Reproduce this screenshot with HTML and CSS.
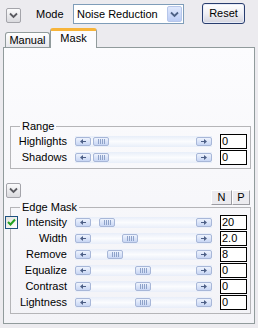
FILE: index.html
```html
<!DOCTYPE html>
<html lang="en">
<head>
    <meta charset="UTF-8">
    <title>Noise Reduction - Mask</title>
    <link rel="stylesheet" href="styles.css">
</head>
<body>
    <div class="window">
        <!-- Top toolbar -->
        <div class="toolbar">
            <div class="chevron-btn">
                <svg width="9" height="7" viewBox="0 0 9 7"><polyline points="1,1.5 4.5,5 8,1.5" fill="none" stroke="#5a5a60" stroke-width="1.8"/></svg>
            </div>
            <span class="mode-label">Mode</span>
            <div class="select">
                <span class="select-text">Noise Reduction</span>
                <span class="select-arrow">
                    <svg width="9" height="7" viewBox="0 0 9 7"><polyline points="1,1.5 4.5,5 8,1.5" fill="none" stroke="#4d6185" stroke-width="1.8"/></svg>
                </span>
            </div>
            <div class="reset-btn">Reset</div>
        </div>

        <!-- Tabs -->
        <div class="tabs">
            <div class="tab">Manual</div>
            <div class="tab active">Mask</div>
        </div>

        <div class="panel">
            <fieldset class="group range">
                <legend>Range</legend>
                <div class="row">
                    <div class="label">Highlights</div>
                    <div class="slider">
                        <span class="slider-btn"><svg width="6" height="5" viewBox="0 0 6 5"><polygon points="0,2.5 3,0 3,5" fill="#4d5f86"/><rect x="3" y="2" width="3" height="1" fill="#4d5f86"/></svg></span>
                        <span class="slider-track"><span class="slider-thumb" style="margin-left: 2px"><span class="grip"></span></span></span>
                        <span class="slider-btn"><svg width="6" height="5" viewBox="0 0 6 5"><polygon points="6,2.5 3,0 3,5" fill="#4d5f86"/><rect x="0" y="2" width="3" height="1" fill="#4d5f86"/></svg></span>
                    </div>
                    <div class="value">0</div>
                </div>
                <div class="row">
                    <div class="label">Shadows</div>
                    <div class="slider">
                        <span class="slider-btn"><svg width="6" height="5" viewBox="0 0 6 5"><polygon points="0,2.5 3,0 3,5" fill="#4d5f86"/><rect x="3" y="2" width="3" height="1" fill="#4d5f86"/></svg></span>
                        <span class="slider-track"><span class="slider-thumb" style="margin-left: 2px"><span class="grip"></span></span></span>
                        <span class="slider-btn"><svg width="6" height="5" viewBox="0 0 6 5"><polygon points="6,2.5 3,0 3,5" fill="#4d5f86"/><rect x="0" y="2" width="3" height="1" fill="#4d5f86"/></svg></span>
                    </div>
                    <div class="value">0</div>
                </div>
            </fieldset>

            <div class="section-bar">
                <div class="chevron-btn">
                    <svg width="9" height="7" viewBox="0 0 9 7"><polyline points="1,1.5 4.5,5 8,1.5" fill="none" stroke="#5a5a60" stroke-width="1.8"/></svg>
                </div>
                <div class="np">
                    <div class="np-btn n">N</div>
                    <div class="np-btn p">P</div>
                </div>
            </div>

            <fieldset class="group edge">
                <legend>Edge Mask</legend>
                <div class="row">
                    <div class="label">
                        <span class="check"><svg width="9" height="8" viewBox="0 0 9 8"><polyline points="1,4 3.5,6.5 8,1.5" fill="none" stroke="#21a121" stroke-width="2"/></svg></span>
                        <span>Intensity</span>
                    </div>
                    <div class="slider">
                        <span class="slider-btn"><svg width="6" height="5" viewBox="0 0 6 5"><polygon points="0,2.5 3,0 3,5" fill="#4d5f86"/><rect x="3" y="2" width="3" height="1" fill="#4d5f86"/></svg></span>
                        <span class="slider-track"><span class="slider-thumb" style="margin-left: 8px"><span class="grip"></span></span></span>
                        <span class="slider-btn"><svg width="6" height="5" viewBox="0 0 6 5"><polygon points="6,2.5 3,0 3,5" fill="#4d5f86"/><rect x="0" y="2" width="3" height="1" fill="#4d5f86"/></svg></span>
                    </div>
                    <div class="value">20</div>
                </div>
                <div class="row">
                    <div class="label">Width</div>
                    <div class="slider">
                        <span class="slider-btn"><svg width="6" height="5" viewBox="0 0 6 5"><polygon points="0,2.5 3,0 3,5" fill="#4d5f86"/><rect x="3" y="2" width="3" height="1" fill="#4d5f86"/></svg></span>
                        <span class="slider-track"><span class="slider-thumb" style="margin-left: 31px"><span class="grip"></span></span></span>
                        <span class="slider-btn"><svg width="6" height="5" viewBox="0 0 6 5"><polygon points="6,2.5 3,0 3,5" fill="#4d5f86"/><rect x="0" y="2" width="3" height="1" fill="#4d5f86"/></svg></span>
                    </div>
                    <div class="value">2.0</div>
                </div>
                <div class="row">
                    <div class="label">Remove</div>
                    <div class="slider">
                        <span class="slider-btn"><svg width="6" height="5" viewBox="0 0 6 5"><polygon points="0,2.5 3,0 3,5" fill="#4d5f86"/><rect x="3" y="2" width="3" height="1" fill="#4d5f86"/></svg></span>
                        <span class="slider-track"><span class="slider-thumb" style="margin-left: 16px"><span class="grip"></span></span></span>
                        <span class="slider-btn"><svg width="6" height="5" viewBox="0 0 6 5"><polygon points="6,2.5 3,0 3,5" fill="#4d5f86"/><rect x="0" y="2" width="3" height="1" fill="#4d5f86"/></svg></span>
                    </div>
                    <div class="value">8</div>
                </div>
                <div class="row">
                    <div class="label">Equalize</div>
                    <div class="slider">
                        <span class="slider-btn"><svg width="6" height="5" viewBox="0 0 6 5"><polygon points="0,2.5 3,0 3,5" fill="#4d5f86"/><rect x="3" y="2" width="3" height="1" fill="#4d5f86"/></svg></span>
                        <span class="slider-track"><span class="slider-thumb" style="margin-left: 44px"><span class="grip"></span></span></span>
                        <span class="slider-btn"><svg width="6" height="5" viewBox="0 0 6 5"><polygon points="6,2.5 3,0 3,5" fill="#4d5f86"/><rect x="0" y="2" width="3" height="1" fill="#4d5f86"/></svg></span>
                    </div>
                    <div class="value">0</div>
                </div>
                <div class="row">
                    <div class="label">Contrast</div>
                    <div class="slider">
                        <span class="slider-btn"><svg width="6" height="5" viewBox="0 0 6 5"><polygon points="0,2.5 3,0 3,5" fill="#4d5f86"/><rect x="3" y="2" width="3" height="1" fill="#4d5f86"/></svg></span>
                        <span class="slider-track"><span class="slider-thumb" style="margin-left: 44px"><span class="grip"></span></span></span>
                        <span class="slider-btn"><svg width="6" height="5" viewBox="0 0 6 5"><polygon points="6,2.5 3,0 3,5" fill="#4d5f86"/><rect x="0" y="2" width="3" height="1" fill="#4d5f86"/></svg></span>
                    </div>
                    <div class="value">0</div>
                </div>
                <div class="row">
                    <div class="label">Lightness</div>
                    <div class="slider">
                        <span class="slider-btn"><svg width="6" height="5" viewBox="0 0 6 5"><polygon points="0,2.5 3,0 3,5" fill="#4d5f86"/><rect x="3" y="2" width="3" height="1" fill="#4d5f86"/></svg></span>
                        <span class="slider-track"><span class="slider-thumb" style="margin-left: 44px"><span class="grip"></span></span></span>
                        <span class="slider-btn"><svg width="6" height="5" viewBox="0 0 6 5"><polygon points="6,2.5 3,0 3,5" fill="#4d5f86"/><rect x="0" y="2" width="3" height="1" fill="#4d5f86"/></svg></span>
                    </div>
                    <div class="value">0</div>
                </div>
            </fieldset>
        </div>
    </div>
</body>
</html>
```

FILE: styles.css
```css
body {
    margin: 0;
    background: #ecebef;
    font-family: 'Liberation Sans', Arial, sans-serif;
    font-size: 11px;
    line-height: 13px;
    color: #000;
}

.window {
    width: 258px;
    height: 328px;
    overflow: hidden;
}

/* Toolbar */
.toolbar {
    display: flex;
    align-items: flex-start;
    height: 28px;
    padding-left: 6px;
}

.chevron-btn {
    width: 15px;
    height: 15px;
    box-sizing: border-box;
    border: 1px solid #a4a4aa;
    border-radius: 2px;
    background: linear-gradient(#fbfbfc, #dadade);
    display: flex;
    align-items: center;
    justify-content: center;
}

.toolbar .chevron-btn {
    margin-top: 8px;
}

.mode-label {
    width: 37px;
    margin-left: 15px;
    margin-top: 8px;
}

.select {
    width: 111px;
    height: 20px;
    margin-top: 4px;
    box-sizing: border-box;
    border: 1px solid #7f9db9;
    background: #fff;
    display: flex;
    align-items: center;
}

.select-text {
    flex: 1;
    padding-left: 3px;
}

.select-arrow {
    width: 15px;
    height: 16px;
    margin: 1px;
    box-sizing: border-box;
    border: 1px solid #b6c6ea;
    border-radius: 2px;
    background: linear-gradient(#dfe8fc, #bccdf5);
    display: flex;
    align-items: center;
    justify-content: center;
}

.reset-btn {
    width: 43px;
    height: 21px;
    margin-left: 18px;
    margin-top: 3px;
    box-sizing: border-box;
    border: 1px solid #283d6e;
    border-radius: 3px;
    background: linear-gradient(#ffffff, #f0f0f4 50%, #d4d4de);
    box-shadow: inset 0 0 0 1px #e8ecf7;
    text-align: center;
    line-height: 19px;
}

/* Tabs */
.tabs {
    display: flex;
    align-items: flex-end;
    height: 20px;
    margin-left: 5px;
    margin-bottom: -1px;
    position: relative;
    z-index: 1;
}

.tab {
    width: 45px;
    height: 15px;
    box-sizing: border-box;
    border: 1px solid #919b9c;
    border-bottom: none;
    border-radius: 3px 3px 0 0;
    background: linear-gradient(#ffffff, #e7e7ec);
    text-align: center;
    padding-top: 1px;
    margin-bottom: 1px;
}

.tab.active {
    width: 47px;
    height: 20px;
    border-top: 3px solid #f7b43a;
    background: #fcfcfe;
    padding-top: 1px;
    margin-bottom: 0;
}

/* Panel */
.panel {
    width: 252px;
    height: 277px;
    margin-left: 3px;
    box-sizing: border-box;
    border: 1px solid #919b9c;
    background: linear-gradient(#fcfcfe, #f3f3f7);
}

.group {
    min-width: 0;
    border: 1px solid #b5b5b8;
    padding: 0 0 3px 0;
}

.group legend {
    padding: 0 2px;
    margin-left: 9px;
    line-height: 13px;
}

.range {
    margin: 72px 3px 0 6px;
}

.edge {
    margin: -3px 3px 0 6px;
}

.row {
    display: flex;
    align-items: center;
    height: 16px;
}

.label {
    width: 56px;
    display: flex;
    justify-content: flex-end;
    align-items: center;
    white-space: nowrap;
}

.check {
    width: 13px;
    height: 13px;
    box-sizing: border-box;
    margin-left: -6px;
    margin-right: auto;
    border: 1px solid #1c5180;
    background: linear-gradient(135deg, #e2e2dd, #ffffff);
    display: flex;
    align-items: center;
    justify-content: center;
}

/* Slider */
.slider {
    width: 137px;
    height: 11px;
    margin-left: 8px;
    display: flex;
    align-items: center;
    background: linear-gradient(#e8eef9, #fbfcfe 50%, #e8eef9);
}

.slider-btn,
.slider-thumb {
    width: 16px;
    height: 9px;
    box-sizing: border-box;
    border: 1px solid #a8b7d8;
    border-radius: 2px;
    background: linear-gradient(#eef3fd, #c8d6f4);
    display: flex;
    align-items: center;
    justify-content: center;
    flex-shrink: 0;
}

.slider-track {
    flex: 1;
    display: flex;
    align-items: center;
}

.grip {
    width: 7px;
    height: 5px;
    background: repeating-linear-gradient(90deg, #8ea2c9 0 1px, transparent 1px 2px);
}

.value {
    width: 27px;
    height: 15px;
    margin-left: 8px;
    box-sizing: border-box;
    border: 1px solid #000;
    background: #fff;
    padding-left: 1px;
    line-height: 13px;
}

/* Edge mask header */
.section-bar {
    display: flex;
    justify-content: space-between;
    align-items: flex-start;
    height: 21px;
    margin-top: 14px;
    padding: 0 4px 0 2px;
}

.np {
    display: flex;
    margin-top: 7px;
}

.np-btn {
    height: 15px;
    box-sizing: border-box;
    border: 1px solid;
    border-color: #ffffff #9c9ca2 #9c9ca2 #ffffff;
    background: #ecebef;
    text-align: center;
    line-height: 13px;
}

.np-btn.n {
    width: 21px;
}

.np-btn.p {
    width: 18px;
}
```
